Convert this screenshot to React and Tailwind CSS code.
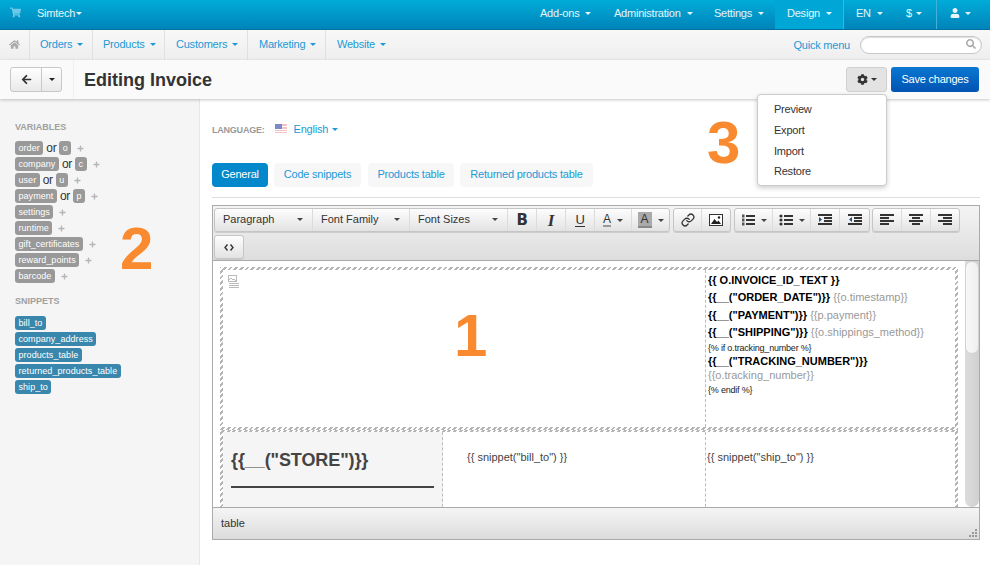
import React from "react";
import { FaShoppingCart, FaHome, FaArrowLeft, FaCog, FaUser, FaSearch, FaPlus } from "react-icons/fa";
import { Link as LinkIcon } from "lucide-react";

const Caret = ({ className = "" }) => (
  <span className={"inline-block w-0 h-0 border-x-[3.5px] border-x-transparent border-t-[3.5px] border-t-current align-middle " + className} />
);

const Badge = ({ children, blue }) => (
  <span className={"inline-block h-[14px] leading-[14px] px-[3.5px] rounded-[3px] text-white text-[9px] tracking-[0.05px] " + (blue ? "bg-[#3a87ad]" : "bg-[#999999]")}>{children}</span>
);

const VarRow = ({ a, b }) => (
  <div className="h-[16px] flex items-center">
    <Badge>{a}</Badge>
    {b && <span className="mx-[3px] text-[12px] tracking-[-0.3px] text-[#333]">or</span>}
    {b && <Badge>{b}</Badge>}
    <FaPlus className="ml-[6px] text-[#b5b5b5] text-[7px]" />
  </div>
);

const TopItem = ({ label, className = "" }) => (
  <div className={"h-full flex items-center gap-[5px] text-[11px] text-white/90 pb-[3px] " + className}>{label}<Caret className="ml-[1px]" /></div>
);

const MenuItem = ({ label, w }) => (
  <div className={"h-full flex items-center gap-[5px] pb-[1px] text-[11px] text-[#1b9ad6] border-r border-[#e0e0e0] " + w}>{label}<Caret /></div>
);

const Tab = ({ children, active, w }) => (
  <div className={"h-[24px] pb-[1px] rounded-[4px] flex items-center justify-center text-[11px] " + w + " " + (active ? "bg-[#0388cc] text-white" : "bg-[#f7f7f7] text-[#1b9ad6]")}>{children}</div>
);

const Tool = ({ children, w, caret, last }) => (
  <div className={"h-full flex items-center justify-center gap-[6px] text-[#333] " + w + (last ? "" : " border-r border-[#dcdcdc]")}>
    {children}
    {caret && <Caret className="text-[#444]" />}
  </div>
);

const Group = ({ children, className = "" }) => (
  <div className={"h-[24px] flex rounded-[3px] border border-[#c5c5c5] bg-gradient-to-b from-[#fdfdfd] to-[#e3e3e3] shadow-[0_1px_0_#ccc] " + className}>{children}</div>
);

const Select = ({ label, w }) => (
  <div className={"h-full flex items-center justify-between pl-[8px] pr-[9px] pb-[1px] text-[11px] tracking-normal text-[#333] border-r border-[#dcdcdc] " + w}>
    {label}<Caret className="text-[#444]" />
  </div>
);

const Bars = ({ rows }) => (
  <svg width="14" height="12" viewBox="0 0 14 12" fill="#333">
    {rows.map((r, i) => <rect key={i} x={r[0]} y={r[1]} width={r[2]} height={r[3] || 2} />)}
  </svg>
);

const AlignLeft = () => <Bars rows={[[0, 0, 14], [0, 3, 9], [0, 6, 14], [0, 9, 9]]} />;
const AlignCenter = () => <Bars rows={[[0, 0, 14], [3, 3, 8], [0, 6, 14], [3, 9, 8]]} />;
const AlignRight = () => <Bars rows={[[0, 0, 14], [5, 3, 9], [0, 6, 14], [5, 9, 9]]} />;

const Indent = ({ out }) => (
  <svg width="14" height="12" viewBox="0 0 14 12" fill="#333">
    <rect x="0" y="0" width="14" height="2" />
    <rect x="6" y="3" width="8" height="2" />
    <rect x="6" y="6" width="8" height="2" />
    <rect x="0" y="9" width="14" height="2" />
    <path d={out ? "M4 3v5L1 5.5z" : "M1 3v5l3-2.5z"} fill="#1f4f7f" />
  </svg>
);

const ListIcon = ({ ordered }) => (
  <svg width="14" height="13" viewBox="0 0 14 13" fill="#333">
    {[1, 5, 9].map((y) => <rect key={y} x="5" y={y} width="9" height="2" />)}
    {[0.5, 4.5, 8.5].map((y) => ordered
      ? <rect key={y} x="1" y={y} width="2.5" height="3" fill="#555" />
      : <circle key={y} cx="2" cy={y + 1.5} r="1.6" />)}
  </svg>
);

const ImageIcon = () => (
  <svg width="14" height="12" viewBox="0 0 14 12">
    <rect x="0.5" y="0.5" width="13" height="11" fill="#fff" stroke="#333" />
    <path d="M2 10l3.5-5 2.5 3 1.5-1.5L12 10z" fill="#222" />
    <circle cx="10" cy="3.5" r="1.2" fill="#222" />
  </svg>
);

const Var = ({ children }) => <span className="font-bold text-[11px] text-black tracking-normal">{children}</span>;
const Val = ({ children }) => <span className="text-[11px] tracking-normal text-[#999]"> {children}</span>;

const Flag = () => (
  <svg width="12" height="9" viewBox="0 0 12 9" className="opacity-80">
    <rect width="12" height="9" fill="#f3b5b5" />
    <rect y="2" width="12" height="1" fill="#fff" />
    <rect y="5" width="12" height="1" fill="#fff" />
    <rect y="7" width="12" height="1" fill="#fff" />
    <rect width="7" height="5" fill="#5a6fc0" />
  </svg>
);

const hatch = "bg-[repeating-linear-gradient(-45deg,#b5b5b5_0,#b5b5b5_2px,#ffffff_2px,#ffffff_4px)]";

export default function App() {
  const font = { fontFamily: '"Liberation Sans", Arial, sans-serif' };
  return (
    <div style={font} className="relative w-[990px] h-[565px] overflow-hidden bg-white flex flex-col text-[#333] tracking-[-0.22px]">
      {/* Top bar */}
      <div className="h-[30px] shrink-0 flex justify-between bg-gradient-to-b from-[#00acd9] to-[#0084b9] border-b border-[#00709f]">
        <div className="flex items-center">
          <FaShoppingCart className="ml-[10px] text-[#6cc8e6] text-[11px] -mt-[5px]" />
          <div className="ml-[16px] text-[11px] text-white/90 flex items-center gap-[1px] -mt-[2px]">Simtech<Caret /></div>
        </div>
        <div className="flex items-center h-full">
          <TopItem label="Add-ons" className="w-[74px]" />
          <TopItem label="Administration" className="w-[100px]" />
          <TopItem label="Settings" className="w-[61px]" />
          <TopItem label="Design" className="w-[68px] pl-[12px] bg-[#00a6d6]" />
          <div className="w-[1px] h-full bg-[#3fb3da]" />
          <TopItem label="EN" className="w-[50px] pl-[12px]" />
          <TopItem label="$" className="w-[42px] pl-[12px] !gap-[3px]" />
          <div className="w-[1px] h-full bg-[#3fb3da]" />
          <div className="w-[53px] flex items-center pb-[3px] pl-[13px] gap-[5px] text-white/90 text-[11px]"><FaUser className="text-[10px]" /><Caret /></div>
        </div>
      </div>
      {/* Menu bar */}
      <div className="h-[30px] shrink-0 flex justify-between bg-gradient-to-b from-[#f8f8f8] to-[#eeeeee]">
        <div className="flex h-full">
          <div className="w-[30px] flex items-center justify-center border-r border-[#e0e0e0]"><FaHome className="text-[#aaa] text-[11px] -mt-[2px]" /></div>
          <MenuItem label="Orders" w="w-[63px] pl-[10px]" />
          <MenuItem label="Products" w="w-[72px] pl-[10px]" />
          <MenuItem label="Customers" w="w-[83px] pl-[11px]" />
          <MenuItem label="Marketing" w="w-[78px] pl-[11px]" />
          <div className="flex items-center pl-[11px] pb-[1px] gap-[5px] text-[11px] text-[#1b9ad6]">Website<Caret /></div>
        </div>
        <div className="flex items-center pr-[8px]">
          <span className="text-[11px] text-[#1b9ad6] mr-[10px]">Quick menu</span>
          <div className="w-[122px] h-[18px] rounded-full border border-[#c8c8c8] bg-white flex items-center justify-end pr-[5px] shadow-[inset_0_1px_1px_#ddd]">
            <FaSearch className="text-[#aaa] text-[10px] -mt-[3px]" />
          </div>
        </div>
      </div>
      {/* Title bar */}
      <div className="relative z-10 h-[39px] shrink-0 flex items-center justify-between bg-[#fafafa] shadow-[0_1px_3px_rgba(0,0,0,0.22)]">
        <div className="flex items-center h-full">
          <div className="ml-[10px] w-[52px] h-[25px] flex rounded-[3px] border border-[#c8c8c8] bg-gradient-to-b from-white to-[#e9e9e9]">
            <div className="w-[31px] flex items-center justify-center border-r border-[#c8c8c8]"><FaArrowLeft className="text-[11px] text-[#333]" /></div>
            <div className="flex-1 flex items-center justify-center text-[#222]"><Caret /></div>
          </div>
          <div className="ml-[11px] w-[1px] h-full bg-[#f0f0f0]" />
          <h1 className="ml-[10px] text-[18px] font-bold text-[#333] leading-none tracking-normal">Editing Invoice</h1>
        </div>
        <div className="flex items-center pr-[11px]">
          <div className="w-[41px] h-[25px] mr-[4px] rounded-[3px] border border-[#d0d0d0] bg-[#e3e3e3] flex items-center justify-center gap-[3px] text-[#333]"><FaCog className="text-[11px]" /><Caret /></div>
          <div className="w-[88px] h-[25px] rounded-[3px] bg-gradient-to-b from-[#0a78d2] to-[#0353b2] flex items-center justify-center text-[11px] text-white">Save changes</div>
        </div>
      </div>
      <div className="flex flex-1 min-h-0">
        {/* Sidebar */}
        <aside className="w-[200px] shrink-0 bg-[#f5f5f5] border-r border-[#e8e8e8] pl-[15px] pt-[23px]">
          <div className="text-[9px] font-bold text-[#a0a0a0] leading-[11px] mb-[3px] tracking-normal">VARIABLES</div>
          <div className="mt-[7px]">
            <VarRow a="order" b="o" />
            <VarRow a="company" b="c" />
            <VarRow a="user" b="u" />
            <VarRow a="payment" b="p" />
            <VarRow a="settings" />
            <VarRow a="runtime" />
            <VarRow a="gift_certificates" />
            <VarRow a="reward_points" />
            <VarRow a="barcode" />
          </div>
          <div className="text-[9px] font-bold text-[#a0a0a0] leading-[11px] mt-[12px] mb-[8px] tracking-normal">SNIPPETS</div>
          {["bill_to", "company_address", "products_table", "returned_products_table", "ship_to"].map((s) => (
            <div key={s} className="h-[16px] flex items-center"><Badge blue>{s}</Badge></div>
          ))}
        </aside>
        {/* Main */}
        <main className="flex-1 min-w-0 pl-[12px] pr-[10px]">
          <div className="h-[64px] flex items-start pt-[24px]">
            <span className="text-[9px] font-bold text-[#999] mt-[1px]">LANGUAGE:</span>
            <span className="ml-[10px] mt-[1px]"><Flag /></span>
            <span className="ml-[7px] text-[11px] text-[#1b9ad6] flex items-center gap-[4px] -mt-[2px]">English<Caret /></span>
          </div>
          <div className="flex gap-[6px]">
            <Tab active w="w-[56px]">General</Tab>
            <Tab w="w-[87px]">Code snippets</Tab>
            <Tab w="w-[86px] ml-[1px]">Products table</Tab>
            <Tab w="w-[133px]">Returned products table</Tab>
          </div>
          <div className="mt-[10px] h-[1px] bg-[#dddddd]" />
          {/* Editor */}
          <div className="mt-[7px] h-[335px] border border-[#aaaaaa] flex flex-col">
            <div className="h-[55px] shrink-0 bg-gradient-to-b from-[#f4f4f4] to-[#dddddd] border-b border-[#aaa] pl-[1px] pt-[2px]">
              <div className="flex">
                <Group className="w-[456px]">
                  <Select label="Paragraph" w="w-[98px]" />
                  <Select label="Font Family" w="w-[97px]" />
                  <Select label="Font Sizes" w="w-[98px]" />
                  <Tool w="w-[29px]"><span className="font-bold text-[15px] leading-none" style={{ fontFamily: '"DejaVu Sans", sans-serif' }}>B</span></Tool>
                  <Tool w="w-[29px]"><span className="font-bold italic text-[17px] leading-none" style={{ fontFamily: '"Liberation Serif", serif' }}>I</span></Tool>
                  <Tool w="w-[29px]"><span className="text-[13px] leading-[13px] border-b-[1.5px] border-[#333]">U</span></Tool>
                  <Tool w="w-[37px]" caret><span className="text-[12px] leading-[12px] border-b-2 border-[#999]">A</span></Tool>
                  <Tool w="w-[37px]" caret last><span className="text-[12px] leading-[14px] w-[14px] text-center bg-[#aaaaaa] border-b-2 border-[#888]">A</span></Tool>
                </Group>
                <Group className="ml-[3px]">
                  <Tool w="w-[28px]"><LinkIcon size={14} strokeWidth={2.2} className="text-[#333]" /></Tool>
                  <Tool w="w-[28px]" last><ImageIcon /></Tool>
                </Group>
                <Group className="ml-[3px]">
                  <Tool w="w-[38px]" caret><ListIcon ordered /></Tool>
                  <Tool w="w-[38px]" caret><ListIcon /></Tool>
                  <Tool w="w-[29px]"><Indent /></Tool>
                  <Tool w="w-[29px]" last><Indent out /></Tool>
                </Group>
                <Group className="ml-[2px]">
                  <Tool w="w-[29px]"><AlignLeft /></Tool>
                  <Tool w="w-[29px]"><AlignCenter /></Tool>
                  <Tool w="w-[28px]" last><AlignRight /></Tool>
                </Group>
              </div>
              <div className="mt-[3px] w-[30px]">
                <Group>
                  <Tool w="w-[28px]" last>
                    <svg width="10" height="7" viewBox="0 0 10 7" fill="none" stroke="#333" strokeWidth="1.4"><path d="M3.5 0.5L1 3.5l2.5 3M6.5 0.5L9 3.5l-2.5 3" /></svg>
                  </Tool>
                </Group>
              </div>
            </div>
            <div className="flex-1 min-h-0 overflow-hidden flex pl-[7px] pt-[6px]">
              <div className="w-[738px] shrink-0">
                <div className={"h-[163px] p-[3px] flex " + hatch}>
                  <div className="flex-1 bg-white flex">
                    <div className="w-[483px] shrink-0 border-r border-dashed border-[#bbbbbb] pl-[5px] pt-[5px]">
                      <svg width="12" height="13" viewBox="0 0 12 13" fill="none" stroke="#bbb">
                        <rect x="0.5" y="0.5" width="8" height="6" />
                        <path d="M1 5l2-2 2 2 1-1 2 2" />
                        <path d="M1 8.5h10M1 10.5h10M1 12.5h10" />
                      </svg>
                    </div>
                    <div className="flex-1 pl-[2px] leading-[17.5px]">
                      <div className="h-[17px]"><Var>{"{{ O.INVOICE_ID_TEXT }}"}</Var></div>
                      <div className="h-[18px]"><Var>{'{{__("ORDER_DATE")}}'}</Var><Val>{"{{o.timestamp}}"}</Val></div>
                      <div className="h-[17px]"><Var>{'{{__("PAYMENT")}}'}</Var><Val>{"{{p.payment}}"}</Val></div>
                      <div className="h-[18px]"><Var>{'{{__("SHIPPING")}}'}</Var><Val>{"{{o.shippings_method}}"}</Val></div>
                      <div className="h-[13px] text-[9px] leading-[16px] tracking-[-0.2px] text-[#222]">{"{% if o.tracking_number %}"}</div>
                      <div className="h-[15px] leading-[14px]"><Var>{'{{__("TRACKING_NUMBER")}}'}</Var></div>
                      <div className="h-[15px] leading-[15px] text-[11px] tracking-normal text-[#999]">{"{{o.tracking_number}}"}</div>
                      <div className="text-[9px] leading-[15px] tracking-[-0.2px] text-[#222]">{"{% endif %}"}</div>
                    </div>
                  </div>
                </div>
                <div className={"h-[82px] pt-[2px] px-[3px] flex " + hatch}>
                  <div className="flex-1 bg-white flex">
                    <div className="w-[220px] shrink-0 bg-[#f5f5f5] border-r border-dashed border-[#bbbbbb] pl-[8px] pr-[8px] pt-[17px]">
                      <div className="text-[18px] font-bold text-[#444] leading-[22px] tracking-[-0.1px] border-b-[2px] border-[#444] pb-[15px]">{'{{__("STORE")}}'}</div>
                    </div>
                    <div className="w-[263px] shrink-0 border-r border-dashed border-[#bbbbbb] pl-[24px] pt-[17px] text-[11px] tracking-normal text-[#444]">{'{{ snippet("bill_to") }}'}</div>
                    <div className="flex-1 pl-[1px] pt-[17px] text-[11px] tracking-normal text-[#444]">{'{{ snippet("ship_to") }}'}</div>
                  </div>
                </div>
              </div>
              <div className="ml-[7px] w-[14px] shrink-0 -mt-[6px] relative rounded-b-[7px] bg-gradient-to-r from-[#dcdcdc] to-[#d0d0d0] h-[246px]">
                <div className="absolute left-0 right-0 top-0 h-[93px] rounded-[7px] bg-gradient-to-r from-[#f8f8f8] to-[#efefef] border border-[#d2d2d2]" />
              </div>
            </div>
            <div className="relative h-[32px] shrink-0 bg-gradient-to-b from-[#f5f5f5] to-[#dcdcdc] border-t border-[#aaa] flex items-center pl-[8px] text-[11px] tracking-normal text-[#333]">
              table
              <svg width="9" height="8" viewBox="0 0 9 8" className="absolute right-[2px] bottom-[2px]" fill="#999">
                <rect x="7" y="0" width="2" height="2" /><rect x="4" y="3" width="2" height="2" /><rect x="7" y="3" width="2" height="2" /><rect x="1" y="6" width="2" height="2" /><rect x="4" y="6" width="2" height="2" /><rect x="7" y="6" width="2" height="2" />
              </svg>
            </div>
          </div>
        </main>
      </div>
      {/* Dropdown */}
      <div className="absolute z-20 left-[757px] top-[94px] w-[130px] h-[92px] rounded-[4px] border border-[#cccccc] bg-white shadow-[0_2px_5px_rgba(0,0,0,0.2)] pl-[16px] pt-[4px] text-[11px] text-[#333]">
        <div className="h-[21px] flex items-center">Preview</div>
        <div className="h-[21px] flex items-center">Export</div>
        <div className="h-[21px] flex items-center">Import</div>
        <div className="h-[19px] flex items-center">Restore</div>
      </div>
      {/* Annotations */}
      <div className="absolute z-30 left-[454px] top-[300px] text-[60px] font-bold leading-[72px] tracking-normal text-[#f98a2f]">1</div>
      <div className="absolute z-30 left-[120px] top-[213px] text-[60px] font-bold leading-[72px] tracking-normal text-[#f98a2f]">2</div>
      <div className="absolute z-30 left-[707px] top-[107px] text-[60px] font-bold leading-[72px] tracking-normal text-[#f98a2f]">3</div>
    </div>
  );
}
